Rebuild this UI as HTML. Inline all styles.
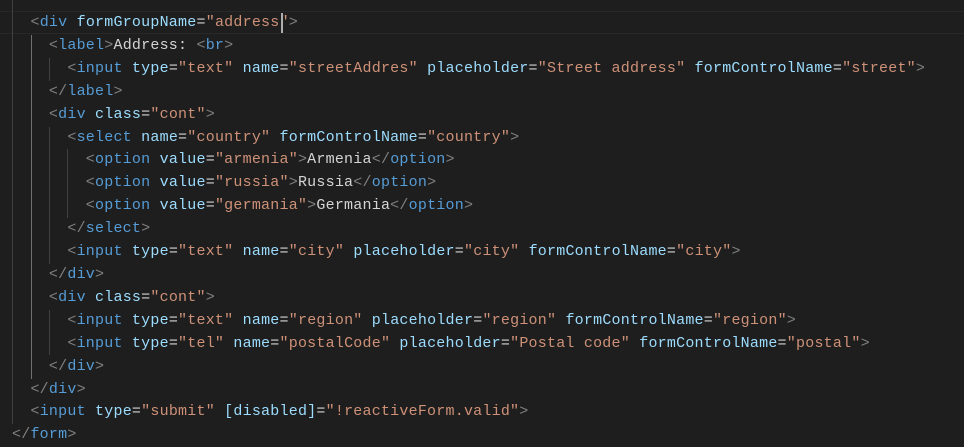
<!DOCTYPE html>
<html><head><meta charset="utf-8"><style>
html,body{margin:0;padding:0;background:#1e1e1e;width:964px;height:447px;overflow:hidden;position:relative}
pre{margin:0;position:absolute;left:12px;top:12px;font-family:"Liberation Mono",monospace;font-size:15px;letter-spacing:0.22px;line-height:22.9px;color:#d4d4d4;white-space:pre}
.p{color:#808080}.t{color:#569cd6}.a{color:#9cdcfe}.s{color:#ce9178}
.g{position:absolute;width:1px;background:#404040}
.ga{background:#707070}
.hl{position:absolute;left:0;right:0;top:11px;height:20.9px;border-top:1px solid #282828;border-bottom:1px solid #282828}
.cur{position:absolute;left:281px;top:13px;width:2px;height:20px;background:#aeafad}
</style></head><body>
<div class="hl"></div>
<div class="g" style="left:12px;top:0;height:424px"></div>
<div class="g ga" style="left:31px;top:35px;height:343.5px"></div>
<div class="g" style="left:49px;top:58px;height:22.9px"></div>
<div class="g" style="left:49px;top:126.5px;height:137.4px"></div>
<div class="g" style="left:49px;top:309.7px;height:45.8px"></div>
<div class="g" style="left:67px;top:149.4px;height:68.7px"></div>
<pre>  <span class="p">&lt;</span><span class="t">div</span> <span class="a">formGroupName</span>=<span class="s">"address"</span><span class="p">&gt;</span>
    <span class="p">&lt;</span><span class="t">label</span><span class="p">&gt;</span>Address: <span class="p">&lt;</span><span class="t">br</span><span class="p">&gt;</span>
      <span class="p">&lt;</span><span class="t">input</span> <span class="a">type</span>=<span class="s">"text"</span> <span class="a">name</span>=<span class="s">"streetAddres"</span> <span class="a">placeholder</span>=<span class="s">"Street address"</span> <span class="a">formControlName</span>=<span class="s">"street"</span><span class="p">&gt;</span>
    <span class="p">&lt;/</span><span class="t">label</span><span class="p">&gt;</span>
    <span class="p">&lt;</span><span class="t">div</span> <span class="a">class</span>=<span class="s">"cont"</span><span class="p">&gt;</span>
      <span class="p">&lt;</span><span class="t">select</span> <span class="a">name</span>=<span class="s">"country"</span> <span class="a">formControlName</span>=<span class="s">"country"</span><span class="p">&gt;</span>
        <span class="p">&lt;</span><span class="t">option</span> <span class="a">value</span>=<span class="s">"armenia"</span><span class="p">&gt;</span>Armenia<span class="p">&lt;/</span><span class="t">option</span><span class="p">&gt;</span>
        <span class="p">&lt;</span><span class="t">option</span> <span class="a">value</span>=<span class="s">"russia"</span><span class="p">&gt;</span>Russia<span class="p">&lt;/</span><span class="t">option</span><span class="p">&gt;</span>
        <span class="p">&lt;</span><span class="t">option</span> <span class="a">value</span>=<span class="s">"germania"</span><span class="p">&gt;</span>Germania<span class="p">&lt;/</span><span class="t">option</span><span class="p">&gt;</span>
      <span class="p">&lt;/</span><span class="t">select</span><span class="p">&gt;</span>
      <span class="p">&lt;</span><span class="t">input</span> <span class="a">type</span>=<span class="s">"text"</span> <span class="a">name</span>=<span class="s">"city"</span> <span class="a">placeholder</span>=<span class="s">"city"</span> <span class="a">formControlName</span>=<span class="s">"city"</span><span class="p">&gt;</span>
    <span class="p">&lt;/</span><span class="t">div</span><span class="p">&gt;</span>
    <span class="p">&lt;</span><span class="t">div</span> <span class="a">class</span>=<span class="s">"cont"</span><span class="p">&gt;</span>
      <span class="p">&lt;</span><span class="t">input</span> <span class="a">type</span>=<span class="s">"text"</span> <span class="a">name</span>=<span class="s">"region"</span> <span class="a">placeholder</span>=<span class="s">"region"</span> <span class="a">formControlName</span>=<span class="s">"region"</span><span class="p">&gt;</span>
      <span class="p">&lt;</span><span class="t">input</span> <span class="a">type</span>=<span class="s">"tel"</span> <span class="a">name</span>=<span class="s">"postalCode"</span> <span class="a">placeholder</span>=<span class="s">"Postal code"</span> <span class="a">formControlName</span>=<span class="s">"postal"</span><span class="p">&gt;</span>
    <span class="p">&lt;/</span><span class="t">div</span><span class="p">&gt;</span>
  <span class="p">&lt;/</span><span class="t">div</span><span class="p">&gt;</span>
  <span class="p">&lt;</span><span class="t">input</span> <span class="a">type</span>=<span class="s">"submit"</span> <span class="a">[disabled]</span>=<span class="s">"!reactiveForm.valid"</span><span class="p">&gt;</span>
<span class="p">&lt;/</span><span class="t">form</span><span class="p">&gt;</span></pre>
<div class="cur"></div>
</body></html>
